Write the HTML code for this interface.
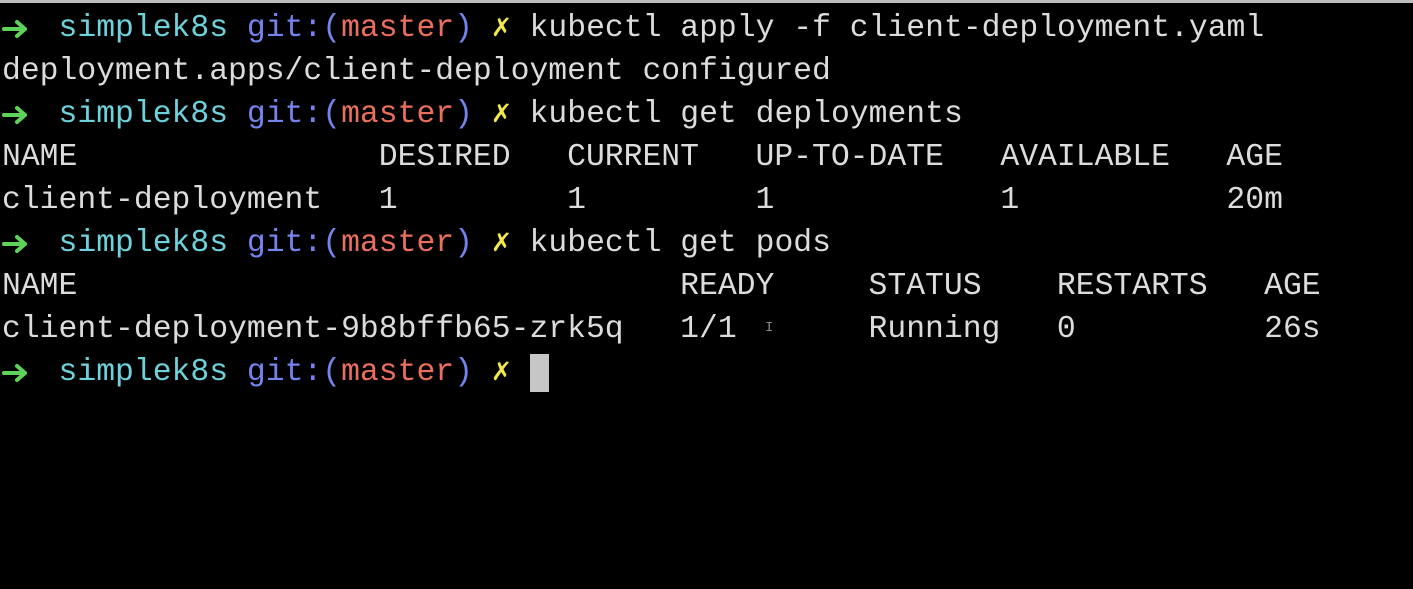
<!DOCTYPE html>
<html><head><meta charset="utf-8"><style>
html,body{margin:0;padding:0;background:#000;width:1413px;height:589px;overflow:hidden}
.top{position:absolute;left:0;top:0;width:1413px;height:3px;background:#bdbdbd}
pre{position:absolute;left:2px;top:7px;margin:0;font-family:"Liberation Mono","DejaVu Sans Mono",monospace;font-size:31.4px;line-height:43px;color:#dcdcdc;letter-spacing:0}
.c{color:#6ed2dc}.b{color:#7584ec}.r{color:#ea6f5d}.y{color:#f3e94d;font-weight:bold}
.cur{position:absolute;left:530px;top:354px;width:19px;height:38px;background:#c6c6c6}
.ar{position:absolute;left:2px;width:28px;height:20px}
.ib{position:absolute;left:765px;top:320px;font:14px "Liberation Mono",monospace;color:#888}
</style></head><body><div class="top"></div>
<pre>   <span class="c">simplek8s</span> <span class="b">git:(</span><span class="r">master</span><span class="b">)</span> <span class="y">✗</span> kubectl apply -f client-deployment.yaml
deployment.apps/client-deployment configured
   <span class="c">simplek8s</span> <span class="b">git:(</span><span class="r">master</span><span class="b">)</span> <span class="y">✗</span> kubectl get deployments
NAME                DESIRED   CURRENT   UP-TO-DATE   AVAILABLE   AGE
client-deployment   1         1         1            1           20m
   <span class="c">simplek8s</span> <span class="b">git:(</span><span class="r">master</span><span class="b">)</span> <span class="y">✗</span> kubectl get pods
NAME                                READY     STATUS    RESTARTS   AGE
client-deployment-9b8bffb65-zrk5q   1/1       Running   0          26s
   <span class="c">simplek8s</span> <span class="b">git:(</span><span class="r">master</span><span class="b">)</span> <span class="y">✗</span> </pre>
<svg class="ar" style="top:19px" viewBox="0 0 28 20"><path d="M2 10H23M15 3L23 10L15 17" stroke="#5ed35a" stroke-width="4" fill="none" stroke-linecap="round" stroke-linejoin="round"/></svg>
<svg class="ar" style="top:105px" viewBox="0 0 28 20"><path d="M2 10H23M15 3L23 10L15 17" stroke="#5ed35a" stroke-width="4" fill="none" stroke-linecap="round" stroke-linejoin="round"/></svg>
<svg class="ar" style="top:234px" viewBox="0 0 28 20"><path d="M2 10H23M15 3L23 10L15 17" stroke="#5ed35a" stroke-width="4" fill="none" stroke-linecap="round" stroke-linejoin="round"/></svg>
<svg class="ar" style="top:363px" viewBox="0 0 28 20"><path d="M2 10H23M15 3L23 10L15 17" stroke="#5ed35a" stroke-width="4" fill="none" stroke-linecap="round" stroke-linejoin="round"/></svg>
<div class="ib">I</div>
<div class="cur"></div>
</body></html>
